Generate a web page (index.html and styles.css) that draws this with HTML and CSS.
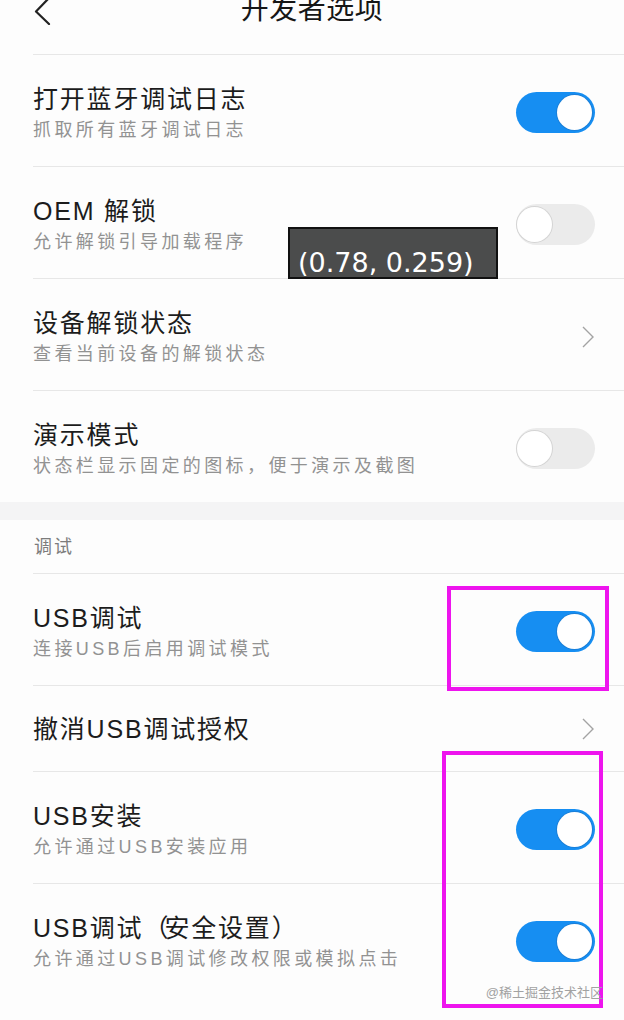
FILE: index.html
```html
<!DOCTYPE html>
<html lang="zh-CN">
<head>
  <meta charset="UTF-8">
  <meta name="viewport" content="width=device-width, initial-scale=1.0">
  <title>开发者选项</title>
  <link rel="stylesheet" href="styles.css">
</head>
<body>
  <header class="topbar">
    <div class="back">
      <svg width="18" height="28" viewBox="0 0 18 28">
        <polyline points="16,1 3,14.5 16,27" fill="none" stroke="#222" stroke-width="2.2" stroke-linecap="round" stroke-linejoin="round"/>
      </svg>
    </div>
    <h1 class="title">开发者选项</h1>
    <div></div>
  </header>

  <section class="group">
    <div class="row">
      <div class="text">
        <div class="row-title">打开蓝牙调试日志</div>
        <div class="row-sub">抓取所有蓝牙调试日志</div>
      </div>
      <span class="switch on"><span class="knob"></span></span>
    </div>
    <div class="row">
      <div class="text">
        <div class="row-title">OEM 解锁</div>
        <div class="row-sub">允许解锁引导加载程序</div>
      </div>
      <span class="switch"><span class="knob"></span></span>
    </div>
    <div class="row">
      <div class="text">
        <div class="row-title">设备解锁状态</div>
        <div class="row-sub">查看当前设备的解锁状态</div>
      </div>
      <svg class="chevron" width="12" height="22" viewBox="0 0 12 22">
        <polyline points="1,1 11,11 1,21" fill="none" stroke="#a3a3a3" stroke-width="1.4"/>
      </svg>
    </div>
    <div class="row">
      <div class="text">
        <div class="row-title">演示模式</div>
        <div class="row-sub">状态栏显示固定的图标，便于演示及截图</div>
      </div>
      <span class="switch"><span class="knob"></span></span>
    </div>
  </section>

  <div class="gap"></div>

  <section class="group">
    <div class="group-title">调试</div>
    <div class="row">
      <div class="text">
        <div class="row-title">USB调试</div>
        <div class="row-sub">连接USB后启用调试模式</div>
      </div>
      <span class="switch on"><span class="knob"></span></span>
    </div>
    <div class="row single">
      <div class="text">
        <div class="row-title">撤消USB调试授权</div>
      </div>
      <svg class="chevron" width="12" height="22" viewBox="0 0 12 22">
        <polyline points="1,1 11,11 1,21" fill="none" stroke="#a3a3a3" stroke-width="1.4"/>
      </svg>
    </div>
    <div class="row">
      <div class="text">
        <div class="row-title">USB安装</div>
        <div class="row-sub">允许通过USB安装应用</div>
      </div>
      <span class="switch on"><span class="knob"></span></span>
    </div>
    <div class="row">
      <div class="text">
        <div class="row-title">USB调试<span class="paren">（</span>安全设置<span class="paren">）</span></div>
        <div class="row-sub">允许通过USB调试修改权限或模拟点击</div>
      </div>
      <span class="switch on"><span class="knob"></span></span>
    </div>
  </section>

  <!-- annotations laid over the screenshot -->
  <div class="coord">(0.78, 0.259)</div>
  <div class="frame frame-one"></div>
  <div class="frame frame-two"></div>
  <div class="watermark">@稀土掘金技术社区</div>
</body>
</html>
```

FILE: styles.css
```css
/* developer options page */
html, body {
  margin: 0;
  padding: 0;
}
body {
  position: relative;
  width: 624px;
  height: 1020px;
  overflow: hidden;
  background-color: #fdfdfd;
  font-family: "Liberation Sans", "Noto Sans CJK SC", sans-serif;
  color: #1c1c1c;
}
.topbar {
  height: 54px;
  display: grid;
  grid-template-columns: 1fr auto 1fr;
  align-items: start;
}
.back svg {
  display: block;
  margin: -3px 0 0 33px;
}
.title {
  margin: 0;
  font-size: 28px;
  font-weight: normal;
  line-height: 20px;
  letter-spacing: 0.5px;
  color: #161616;
}
.group {
  margin-left: 33px;
}
.row {
  display: flex;
  align-items: center;
  justify-content: space-between;
  padding: 28px 29px 24px 0;
  border-top: 1px solid #e7e7e7;
}
.row.single {
  padding-top: 27px;
  padding-bottom: 26px;
}
.row-title {
  font-size: 25px;
  line-height: 32px;
  letter-spacing: 1.8px;
  white-space: nowrap;
}
.row-title .paren {
  letter-spacing: -4px;
}
.row-sub {
  margin-top: 3px;
  font-size: 18px;
  line-height: 24px;
  letter-spacing: 3.4px;
  color: #929292;
  white-space: nowrap;
}
.group-title {
  padding: 15px 0 14px 1px;
  font-size: 18px;
  line-height: 24px;
  letter-spacing: 2px;
  color: #7c7c7c;
}
.gap {
  height: 18px;
  background-color: #f4f4f5;
}
.switch {
  flex: none;
  display: flex;
  align-items: center;
  width: 79px;
  height: 41px;
  border-radius: 21px;
  background-color: #ebebeb;
  box-sizing: border-box;
  padding: 0 1px;
}
.switch .knob {
  width: 35px;
  height: 35px;
  border-radius: 50%;
  background-color: #fff;
  box-shadow: 0 0 0 1px #d4d4d4;
}
.switch.on {
  background-color: #168ef2;
  justify-content: flex-end;
  padding: 0 3px;
}
.switch.on .knob {
  box-shadow: 0 0 0 1px #1a7fd8;
}
.chevron {
  flex: none;
  margin-right: 1px;
}
.coord {
  position: absolute;
  left: 288px;
  top: 227px;
  width: 210px;
  height: 52px;
  box-sizing: border-box;
  padding: 18px 0 0 8px;
  overflow: hidden;
  border: 2px solid #111;
  background-color: #4b4c4c;
  color: #fff;
  font-family: "DejaVu Sans", sans-serif;
  font-size: 27px;
  line-height: normal;
  white-space: nowrap;
}
.frame {
  position: absolute;
  box-sizing: border-box;
  border: 4px solid #ee14ee;
}
.frame-one {
  left: 447px;
  top: 586px;
  width: 162px;
  height: 105px;
}
.frame-two {
  left: 442px;
  top: 751px;
  width: 161px;
  height: 257px;
}
.watermark {
  position: absolute;
  right: 21px;
  top: 984px;
  font-size: 13px;
  line-height: 18px;
  color: #a2a2a2;
  white-space: nowrap;
}
```
